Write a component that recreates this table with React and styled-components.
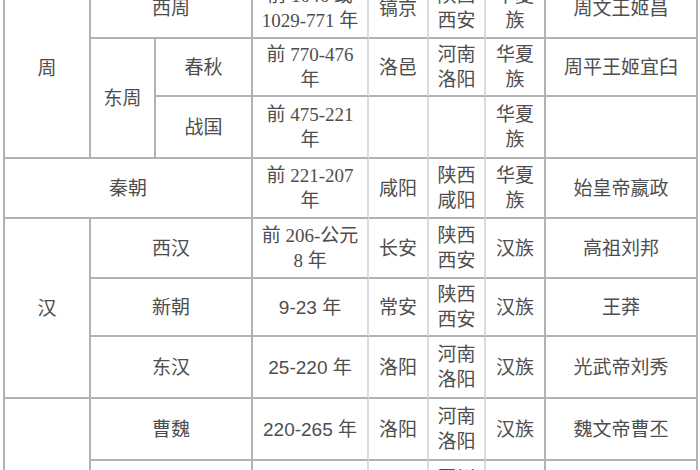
import styled, { createGlobalStyle } from "styled-components";

const GlobalStyle = createGlobalStyle`
  html, body {
    margin: 0;
    padding: 0;
    background: #ffffff;
    overflow: hidden;
  }
`;

const Page = styled.div`
  width: 700px;
  height: 470px;
  overflow: hidden;
  padding-left: 3px;
  box-sizing: border-box;
`;

const Table = styled.table`
  margin-top: -23px;
  width: 693px;
  table-layout: fixed;
  border-collapse: separate;
  border-spacing: 0;
  border-left: 2px solid #b2b2b2;
  border-top: 2px solid #b2b2b2;
  font-family: "Liberation Serif", "Noto Sans CJK SC", serif;
  font-size: 19px;
  line-height: 25px;
  color: #4e4e4e;
`;

const Col = styled.col`
  width: ${(p) => p.$w}px;
`;

const Row = styled.tr`
  height: ${(p) => p.$h}px;
`;

const Cell = styled.td`
  box-sizing: border-box;
  padding: 0 3px;
  text-align: center;
  vertical-align: middle;
  border-right: 2px solid ${(p) => (p.$light ? "#dcdcdc" : "#b2b2b2")};
  border-bottom: 2px solid #b2b2b2;
  font-family: ${(p) =>
    p.$sans
      ? '"Liberation Sans", "Noto Sans CJK SC", sans-serif'
      : '"Liberation Serif", "Noto Sans CJK SC", serif'};
  white-space: nowrap;
`;

const Line = styled.div`
  display: block;
`;

function Lines({ children }) {
  return children.map((t, i) => <Line key={i}>{t}</Line>);
}

export default function App() {
  return (
    <Page>
      <GlobalStyle />
      <Table>
        <colgroup>
          <Col $w={86} />
          <Col $w={65} />
          <Col $w={97} />
          <Col $w={116} />
          <Col $w={60} />
          <Col $w={57} />
          <Col $w={60} />
          <Col $w={152} />
        </colgroup>
        <tbody>
          <Row $h={60}>
            <Cell rowSpan={3}>周</Cell>
            <Cell colSpan={2}>西周</Cell>
            <Cell $light>
              <Lines>{["前 1046 或", "1029-771 年"]}</Lines>
            </Cell>
            <Cell $light>镐京</Cell>
            <Cell $light>
              <Lines>{["陕西", "西安"]}</Lines>
            </Cell>
            <Cell>
              <Lines>{["华夏", "族"]}</Lines>
            </Cell>
            <Cell>周文王姬昌</Cell>
          </Row>
          <Row $h={58}>
            <Cell rowSpan={2}>东周</Cell>
            <Cell>春秋</Cell>
            <Cell $light>
              <Lines>{["前 770-476", "年"]}</Lines>
            </Cell>
            <Cell $light>洛邑</Cell>
            <Cell $light>
              <Lines>{["河南", "洛阳"]}</Lines>
            </Cell>
            <Cell>
              <Lines>{["华夏", "族"]}</Lines>
            </Cell>
            <Cell>周平王姬宜臼</Cell>
          </Row>
          <Row $h={62}>
            <Cell>战国</Cell>
            <Cell $light>
              <Lines>{["前 475-221", "年"]}</Lines>
            </Cell>
            <Cell $light />
            <Cell $light />
            <Cell>
              <Lines>{["华夏", "族"]}</Lines>
            </Cell>
            <Cell />
          </Row>
          <Row $h={60}>
            <Cell colSpan={3}>秦朝</Cell>
            <Cell $light>
              <Lines>{["前 221-207", "年"]}</Lines>
            </Cell>
            <Cell $light>咸阳</Cell>
            <Cell $light>
              <Lines>{["陕西", "咸阳"]}</Lines>
            </Cell>
            <Cell>
              <Lines>{["华夏", "族"]}</Lines>
            </Cell>
            <Cell>始皇帝嬴政</Cell>
          </Row>
          <Row $h={60}>
            <Cell rowSpan={3}>汉</Cell>
            <Cell colSpan={2}>西汉</Cell>
            <Cell $light>
              <Lines>{["前 206-公元", "8 年"]}</Lines>
            </Cell>
            <Cell $light>长安</Cell>
            <Cell $light>
              <Lines>{["陕西", "西安"]}</Lines>
            </Cell>
            <Cell>汉族</Cell>
            <Cell>高祖刘邦</Cell>
          </Row>
          <Row $h={58}>
            <Cell colSpan={2}>新朝</Cell>
            <Cell $light $sans>9-23 年</Cell>
            <Cell $light>常安</Cell>
            <Cell $light>
              <Lines>{["陕西", "西安"]}</Lines>
            </Cell>
            <Cell>汉族</Cell>
            <Cell>王莽</Cell>
          </Row>
          <Row $h={62}>
            <Cell colSpan={2}>东汉</Cell>
            <Cell $light $sans>25-220 年</Cell>
            <Cell $light>洛阳</Cell>
            <Cell $light>
              <Lines>{["河南", "洛阳"]}</Lines>
            </Cell>
            <Cell>汉族</Cell>
            <Cell>光武帝刘秀</Cell>
          </Row>
          <Row $h={62}>
            <Cell rowSpan={3}>三国</Cell>
            <Cell colSpan={2}>曹魏</Cell>
            <Cell $light $sans>220-265 年</Cell>
            <Cell $light>洛阳</Cell>
            <Cell $light>
              <Lines>{["河南", "洛阳"]}</Lines>
            </Cell>
            <Cell>汉族</Cell>
            <Cell>魏文帝曹丕</Cell>
          </Row>
          <Row $h={60}>
            <Cell colSpan={2}>蜀汉</Cell>
            <Cell $light $sans>221-263 年</Cell>
            <Cell $light>成都</Cell>
            <Cell $light>
              <Lines>{["四川", "成都"]}</Lines>
            </Cell>
            <Cell>汉族</Cell>
            <Cell>昭烈帝刘备</Cell>
          </Row>
          <Row $h={60}>
            <Cell colSpan={2}>东吴</Cell>
            <Cell $light $sans>222-280 年</Cell>
            <Cell $light>建业</Cell>
            <Cell $light>
              <Lines>{["江苏", "南京"]}</Lines>
            </Cell>
            <Cell>汉族</Cell>
            <Cell>吴大帝孙权</Cell>
          </Row>
        </tbody>
      </Table>
    </Page>
  );
}
